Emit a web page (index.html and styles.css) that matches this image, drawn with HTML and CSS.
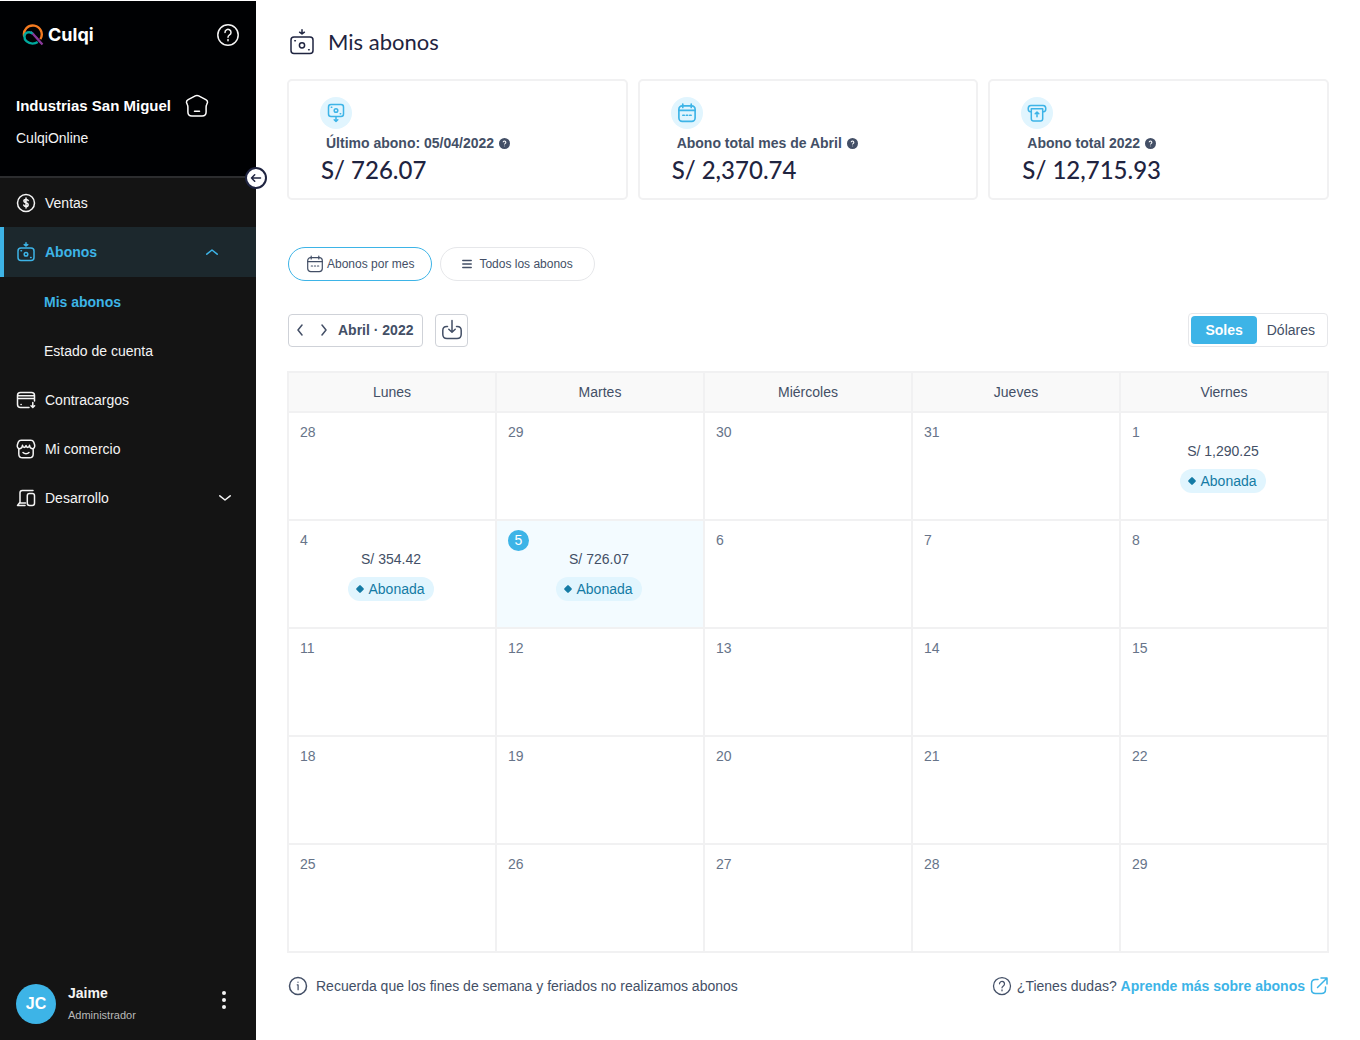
FILE: index.html
```html
<!DOCTYPE html>
<html lang="es">
<head>
<meta charset="utf-8">
<meta name="viewport" content="width=device-width, initial-scale=1">
<title>Mis abonos</title>
<link rel="stylesheet" href="styles.css">
</head>
<body>
<svg class="sprite" aria-hidden="true">
  <symbol id="i-help" viewBox="0 0 24 24">
    <circle cx="12" cy="12" r="10.2"/><path d="M9 9.4a3 3 0 1 1 4.6 2.5c-1 .7-1.6 1.2-1.6 2.3M12 16.6v1.2"/>
  </symbol>
  <symbol id="i-deposit" viewBox="0 0 26 26">
    <rect x="2" y="8" width="22" height="16.5" rx="3"/><circle cx="13" cy="16.3" r="2.6"/>
    <path d="M5.800 11.800h.6M19.600 20.800h.6M13 .8v3.800M10.600 3.200 13 5l2.400-1.800"/>
  </symbol>
  <symbol id="i-calendar" viewBox="0 0 18 18">
    <rect x="1.700" y="2.600" width="14.600" height="14" rx="3"/><path d="M1.700 6.600h14.600M5.200 1v3M12.800 1v3M5.300 11h1.200M8.400 11h1.200M11.500 11h1.200"/>
  </symbol>
  <symbol id="i-question" viewBox="0 0 10 10">
    <circle class="solid" cx="5" cy="5" r="5"/><path class="mark" d="M3.800 3.900a1.200 1.200 0 1 1 1.900 1c-.5.3-.7.5-.7.9M5 7.100v.5"/>
  </symbol>
</svg>

<div class="app">
  <aside class="sidebar">
    <header class="brand">
      <div class="brand-row">
        <a class="logo" href="#">
          <svg width="22" height="24" viewBox="0 0 22 24" fill="none" stroke-width="2.400" aria-hidden="true">
            <path stroke="#8a3a9c" d="M8.500 9c3.500 1.800 6 6.500 12 12.500"/>
            <path stroke="#f47b20" d="M2.200 13.500A8.900 8.900 0 1 1 18.300 16.200"/>
            <path stroke="#00a99d" d="M10.500 10.800c-2.600-3-7.800-1.400-8.100 2.400-.2 4.200 3.600 7.400 8.100 7.400 2 0 3.800-.5 5.200-1.500"/>
          </svg>
          <span>Culqi</span>
        </a>
        <button class="icon-btn" type="button" aria-label="Ayuda"><svg class="icon" width="24" height="24"><use href="#i-help"/></svg></button>
      </div>
      <div class="shop">
        <strong>Industrias San Miguel</strong>
        <svg class="icon" width="24" height="24" viewBox="0 0 24 24" aria-hidden="true"><path d="M10.300 1.900 3.200 5.600C1.700 6.400 1.200 7.600 1.700 9l.7 1.700c.4.900.5 1.500.5 2.500v4.900c0 2.700 1.300 4 4 4h10.200c2.700 0 4-1.300 4-4v-4.900c0-1 .1-1.600.5-2.500l.7-1.700c.5-1.400 0-2.600-1.500-3.400l-7.100-3.700c-1.200-.6-2.200-.6-3.400 0ZM9.500 17.300h5"/></svg>
      </div>
      <p class="product">CulqiOnline</p>
      <button class="collapse" type="button" aria-label="Contraer menú"><svg class="icon" width="12" height="12" viewBox="0 0 12 12"><path d="M10.500 6h-9M4.700 2.800 1.500 6l3.200 3.200"/></svg></button>
    </header>

    <nav class="menu">
      <a class="item" href="#">
        <svg class="icon" width="20" height="20" viewBox="0 0 20 20"><circle cx="10" cy="10" r="8.500"/><path d="M12.200 7.600c-.3-.8-1.100-1.200-2.200-1.200-1.300 0-2.100.6-2.100 1.600 0 2.300 4.300 1.200 4.300 3.700 0 1.100-.9 1.800-2.200 1.800-1.200 0-2-.5-2.300-1.400M10 5v10"/></svg>
        Ventas
      </a>
      <a class="item active" href="#">
        <svg class="icon" width="20" height="20" viewBox="0 0 20 20"><rect x="2" y="6" width="16" height="12.500" rx="3"/><circle cx="10" cy="12.300" r="1.800"/><path d="M5 8.800h.5M14.600 15.600h.5M10 .8v3M8.300 2.600 10 4l1.700-1.400"/></svg>
        Abonos
        <svg class="icon chevron up" width="12" height="8" viewBox="0 0 12 8"><path d="m.8 6.200 5.200-4.200 5.200 4.200"/></svg>
      </a>
      <a class="item sub current" href="#">Mis abonos</a>
      <a class="item sub" href="#">Estado de cuenta</a>
      <a class="item" href="#">
        <svg class="icon" width="20" height="20" viewBox="0 0 20 20"><path d="M18.500 11V5.500c0-1.900-1.100-3-3-3h-11c-1.900 0-3 1.100-3 3v9c0 1.900 1.100 3 3 3h8.500M1.500 5.800h17M1.500 8.500h17M5 14.500h.2M16.800 12.500v4.800M15 15.800l1.800 1.700 1.800-1.700"/></svg>
        Contracargos
      </a>
      <a class="item" href="#">
        <svg class="icon" width="20" height="20" viewBox="0 0 20 20"><path d="M5.200 1.200h9.600c1.500 0 2.400.7 2.900 1.900l.9 2.600c.6 2.200-.6 4-2.400 4-1.600 0-2.500-1.200-2.700-3.400-.4 2.400-2.300 3-3.500.3-1.200 2.700-3.100 2.100-3.500-.3-.2 2.200-1.100 3.400-2.700 3.400-1.800 0-3-1.800-2.400-4l.9-2.600c.5-1.200 1.400-1.900 2.900-1.900ZM2.800 9.700v5.200c0 2.600 1.400 3.900 3.800 3.900h6.800c2.400 0 3.800-1.300 3.800-3.900V9.700M7 13.500c1.500 1.600 4.500 1.600 6 0"/></svg>
        Mi comercio
      </a>
      <a class="item" href="#">
        <svg class="icon" width="20" height="20" viewBox="0 0 20 20"><path d="M17 2.500H6.300c-1.500 0-2.300.8-2.300 2.300v9.400l-2.500 3.300H9M3.500 15H9.500"/><rect x="11.300" y="5.500" width="7.200" height="12" rx="2.200"/></svg>
        Desarrollo
        <svg class="icon chevron" width="12" height="8" viewBox="0 0 12 8"><path d="m.8 1.800 5.200 4.200 5.200-4.200"/></svg>
      </a>
    </nav>

    <footer class="user">
      <span class="avatar">JC</span>
      <div class="who"><strong>Jaime</strong><span>Administrador</span></div>
      <button class="more" type="button" aria-label="Opciones"><svg width="6" height="20" viewBox="0 0 6 20" fill="currentColor"><circle cx="3" cy="3" r="2"/><circle cx="3" cy="10" r="2"/><circle cx="3" cy="17" r="2"/></svg></button>
    </footer>
  </aside>

  <main class="content">
    <div class="page-title">
      <svg class="icon" width="28" height="26"><use href="#i-deposit"/></svg>
      <h1>Mis abonos</h1>
    </div>

    <section class="cards">
      <article class="card">
        <span class="bubble"><svg class="icon" width="18" height="20" viewBox="0 0 18 20"><rect x="1.500" y="1.500" width="15" height="12" rx="2.500"/><circle cx="9" cy="7.500" r="1.800"/><path d="M4.300 4.300h.5M13.200 10.800h.5M9 14v4.500M7.200 16.700 9 18.400l1.800-1.700"/></svg></span>
        <h2>Último abono: 05/04/2022 <svg class="tip" width="11" height="11"><use href="#i-question"/></svg></h2>
        <p class="total">S/ 726.07</p>
      </article>
      <article class="card">
        <span class="bubble"><svg class="icon" width="20" height="20"><use href="#i-calendar"/></svg></span>
        <h2>Abono total mes de Abril <svg class="tip" width="11" height="11"><use href="#i-question"/></svg></h2>
        <p class="total">S/ 2,370.74</p>
      </article>
      <article class="card">
        <span class="bubble"><svg class="icon" width="20" height="20" viewBox="0 0 20 20"><path d="M4 8.800H3.500C2 8.800 1.200 7.500 1.200 5.800S2 2.500 3.800 2.500h12.400c1.800 0 2.600 1.600 2.600 3.300s-.8 3-2.300 3H16M4.300 5.700h11.400v10c0 1.500-.8 2.300-2.300 2.300H6.600c-1.500 0-2.300-.8-2.300-2.300ZM10 13.800V9.200M8.200 10.800 10 9.100l1.800 1.700"/></svg></span>
        <h2>Abono total 2022 <svg class="tip" width="11" height="11"><use href="#i-question"/></svg></h2>
        <p class="total">S/ 12,715.93</p>
      </article>
    </section>

    <div class="tabs">
      <button class="tab selected" type="button"><svg class="icon" width="18" height="18"><use href="#i-calendar"/></svg>Abonos por mes</button>
      <button class="tab" type="button"><svg class="icon list" width="10" height="10" viewBox="0 0 10 10"><path d="M.8 1.500h8.400M.8 5h8.400M.8 8.500h8.400"/></svg>Todos los abonos</button>
    </div>

    <div class="toolbar">
      <div class="month">
        <button type="button" aria-label="Mes anterior"><svg class="icon" width="8" height="12" viewBox="0 0 8 12"><path d="M6 1 2 6l4 5"/></svg></button>
        <button type="button" aria-label="Mes siguiente"><svg class="icon" width="8" height="12" viewBox="0 0 8 12"><path d="m2 1 4 5-4 5"/></svg></button>
        <strong>Abril · 2022</strong>
      </div>
      <button class="download" type="button" aria-label="Descargar"><svg class="icon" width="22" height="22" viewBox="0 0 22 22"><path d="M6.500 7.500H5.800C3 7.500 1.800 9 1.800 11.500v3.700c0 2.700 1.400 4.300 4.200 4.300h10c2.800 0 4.200-1.600 4.200-4.300v-3.700c0-2.500-1.200-4-4-4h-.7M11 1.500v11.500M7.800 10.200 11 13.200l3.200-3"/></svg></button>
      <div class="currency">
        <button class="on" type="button" aria-pressed="true">Soles</button>
        <button type="button" aria-pressed="false">Dólares</button>
      </div>
    </div>

    <table class="calendar">
      <thead><tr><th>Lunes</th><th>Martes</th><th>Miércoles</th><th>Jueves</th><th>Viernes</th></tr></thead>
      <tbody>
        <tr>
          <td><span class="day">28</span></td><td><span class="day">29</span></td><td><span class="day">30</span></td><td><span class="day">31</span></td>
          <td><span class="day">1</span><div class="pay">S/ 1,290.25<span class="pill">Abonada</span></div></td>
        </tr>
        <tr>
          <td><span class="day">4</span><div class="pay">S/ 354.42<span class="pill">Abonada</span></div></td>
          <td class="today"><span class="day">5</span><div class="pay">S/ 726.07<span class="pill">Abonada</span></div></td>
          <td><span class="day">6</span></td><td><span class="day">7</span></td><td><span class="day">8</span></td>
        </tr>
        <tr><td><span class="day">11</span></td><td><span class="day">12</span></td><td><span class="day">13</span></td><td><span class="day">14</span></td><td><span class="day">15</span></td></tr>
        <tr><td><span class="day">18</span></td><td><span class="day">19</span></td><td><span class="day">20</span></td><td><span class="day">21</span></td><td><span class="day">22</span></td></tr>
        <tr><td><span class="day">25</span></td><td><span class="day">26</span></td><td><span class="day">27</span></td><td><span class="day">28</span></td><td><span class="day">29</span></td></tr>
      </tbody>
    </table>

    <div class="notes">
      <p class="note"><svg class="icon" width="20" height="20" viewBox="0 0 20 20"><circle cx="10" cy="10" r="8.500"/><path stroke-width="1.200" d="M9.200 8.800h.9v4.900M10 6v.3"/></svg>Recuerda que los fines de semana y feriados no realizamos abonos</p>
      <p class="note help"><svg class="icon" width="20" height="20"><use href="#i-help"/></svg><span>¿Tienes dudas? <a href="#">Aprende más sobre abonos</a></span><svg class="icon out" width="18" height="18" viewBox="0 0 18 18"><path d="M8 2.500H5.500C2.800 2.500 1.500 4 1.500 6.500v6c0 2.700 1.300 4 4 4h6c2.700 0 4-1.300 4-4V10M11 1h6v6M16.800 1.200 7.500 10.500"/></svg></p>
    </div>
  </main>
</div>
</body>
</html>
```
FILE: styles.css
```css
:root {
  --blue: #3db4e7;
  --navy: #1f2440;
  --slate: #434f66;
  --muted: #677489;
  --line: #f1f1f2;
  --pale: #e1f5fe;
}

* { box-sizing: border-box; }

body {
  margin: 0;
  background: #fff;
  color: var(--slate);
  font: 14px/20px "Liberation Sans", Arial, sans-serif;
}

h1, h2, p { margin: 0; }
a { color: inherit; text-decoration: none; }

button {
  padding: 0;
  border: 0;
  background: none;
  color: inherit;
  font: inherit;
  cursor: pointer;
}

svg { display: block; flex: none; }
.sprite { position: absolute; width: 0; height: 0; }

.icon {
  fill: none;
  stroke: currentColor;
  stroke-width: 1.5;
  stroke-linecap: round;
  stroke-linejoin: round;
}

.app {
  display: grid;
  grid-template-columns: 256px 1fr;
  min-height: 100vh;
}

/* Sidebar */
.sidebar {
  display: flex;
  flex-direction: column;
  border-top: 1px solid #fff;
  background: #141414;
  color: #f4f4f4;
}

.brand {
  position: relative;
  height: 177px;
  padding: 22px 16px 0;
  border-bottom: 2px solid #2c2d2f;
  background: #000103;
}

.brand-row {
  display: flex;
  align-items: center;
  justify-content: space-between;
  padding-left: 6px;
}

.logo {
  display: flex;
  align-items: center;
  gap: 4px;
  color: #fff;
  font: 700 18px/24px Inter, sans-serif;
}

.shop {
  display: flex;
  align-items: center;
  gap: 14px;
  margin-top: 47px;
  color: #fff;
  font-size: 15px;
}

.product { margin-top: 10px; }

.collapse {
  position: absolute;
  right: -11px;
  bottom: -13px;
  display: grid;
  place-items: center;
  width: 22px;
  height: 22px;
  border: 2px solid var(--navy);
  border-radius: 50%;
  background: #fff;
  color: var(--navy);
}

.item {
  display: flex;
  align-items: center;
  gap: 9px;
  height: 49px;
  padding: 0 25px 0 16px;
}

.item.active {
  height: 50px;
  padding-right: 38px;
  border-left: 4px solid var(--blue);
  padding-left: 12px;
  background: #1c282d;
  color: var(--blue);
  font-weight: 700;
}

.item.sub { padding-left: 44px; }
.item.current { color: var(--blue); font-weight: 700; }
.chevron { margin-left: auto; }

.user {
  display: flex;
  align-items: center;
  gap: 12px;
  margin-top: auto;
  padding: 0 29px 15px 16px;
}

.avatar {
  display: grid;
  place-items: center;
  width: 40px;
  height: 40px;
  border-radius: 50%;
  background: var(--blue);
  color: #fff;
  font-size: 16px;
  font-weight: 700;
}

.who { display: grid; flex: 1; gap: 2px; }
.who span { color: #b9b9b9; font-size: 11px; }
.more { align-self: flex-start; padding-top: 7px; }

/* Content */
.content { padding: 28px 32px 24px; }

.page-title {
  display: flex;
  align-items: center;
  gap: 12px;
  color: var(--navy);
}

h1 { font: 400 22px/28px Lato, sans-serif; }

.cards {
  display: grid;
  grid-template-columns: repeat(3, 1fr);
  gap: 10px;
  margin: 23px -1px 0;
}

.card {
  height: 121px;
  padding: 16px 31px;
  border: 2px solid var(--line);
  border-radius: 5px;
}

.bubble {
  display: grid;
  place-items: center;
  width: 32px;
  height: 32px;
  border-radius: 50%;
  background: var(--pale);
  color: var(--blue);
}

h2 {
  display: flex;
  align-items: center;
  gap: 5px;
  margin-top: 4px;
  padding-left: 6px;
  font-size: 14px;
  line-height: 20px;
}

.solid { fill: var(--slate); }
.mark { fill: none; stroke: #fff; stroke-width: 1; }

.total {
  padding-left: 1px;
  color: var(--navy);
  font: 500 24px/34px Lato, sans-serif;
}

.tabs { display: flex; gap: 8px; margin-top: 47px; }

.tab {
  display: flex;
  align-items: center;
  justify-content: center;
  gap: 3px;
  height: 34px;
  padding: 0 17px;
  border: 1px solid #e6e7ea;
  border-radius: 17px;
  font-size: 12px;
}

.tab + .tab { gap: 7px; padding: 0 21px; }
.tab.selected { border-color: var(--blue); }
.tab .icon { stroke-width: 1.2; }
.tab .list { stroke-width: 1.5; }

.toolbar {
  display: flex;
  align-items: center;
  gap: 12px;
  margin-top: 32px;
}

.month, .download {
  display: flex;
  align-items: center;
  height: 33px;
  border: 1px solid #cfd2d8;
  border-radius: 4px;
}

.month { gap: 16px; padding: 0 9px 0 7px; }
.month strong { margin-left: -6px; }
.download { justify-content: center; width: 33px; }

.currency {
  display: flex;
  height: 34px;
  margin-left: auto;
  padding: 2px;
  border: 1px solid #e6e7ea;
  border-radius: 4px;
}

.currency button { padding: 0 10px; border-radius: 4px; }
.currency .on { padding: 0 14px; background: var(--blue); color: #fff; font-weight: 700; }

.calendar {
  width: calc(100% + 2px);
  margin: 24px -1px 0;
  border-collapse: collapse;
  table-layout: fixed;
}

.calendar th, .calendar td { border: 2px solid var(--line); }
.calendar th { height: 40px; padding: 0; background: #f9f9f9; font-weight: 400; }
.calendar td { height: 108px; padding: 9px 11px; vertical-align: top; }
.day { display: block; width: 21px; color: var(--muted); line-height: 21px; }

.calendar .today { background: #f3fbff; }
.today .day { border-radius: 50%; background: var(--blue); color: #fff; text-align: center; }

.pay {
  display: flex;
  flex-direction: column;
  align-items: center;
  gap: 10px;
  padding-right: 2px;
  line-height: 16px;
}

.pill {
  display: flex;
  align-items: center;
  gap: 5px;
  height: 24px;
  padding: 0 9px;
  border-radius: 12px;
  background: var(--pale);
  color: #147ba5;
}

.pill::before {
  width: 6px;
  height: 6px;
  border-radius: 1px;
  background: currentColor;
  content: "";
  transform: rotate(45deg);
}

.notes {
  display: flex;
  flex-wrap: wrap;
  justify-content: space-between;
  gap: 8px;
  margin-top: 23px;
}

.note { display: flex; align-items: center; gap: 8px; }
.help { gap: 5px; }
.help a, .out { color: var(--blue); }
.help a { font-weight: 700; }
```
